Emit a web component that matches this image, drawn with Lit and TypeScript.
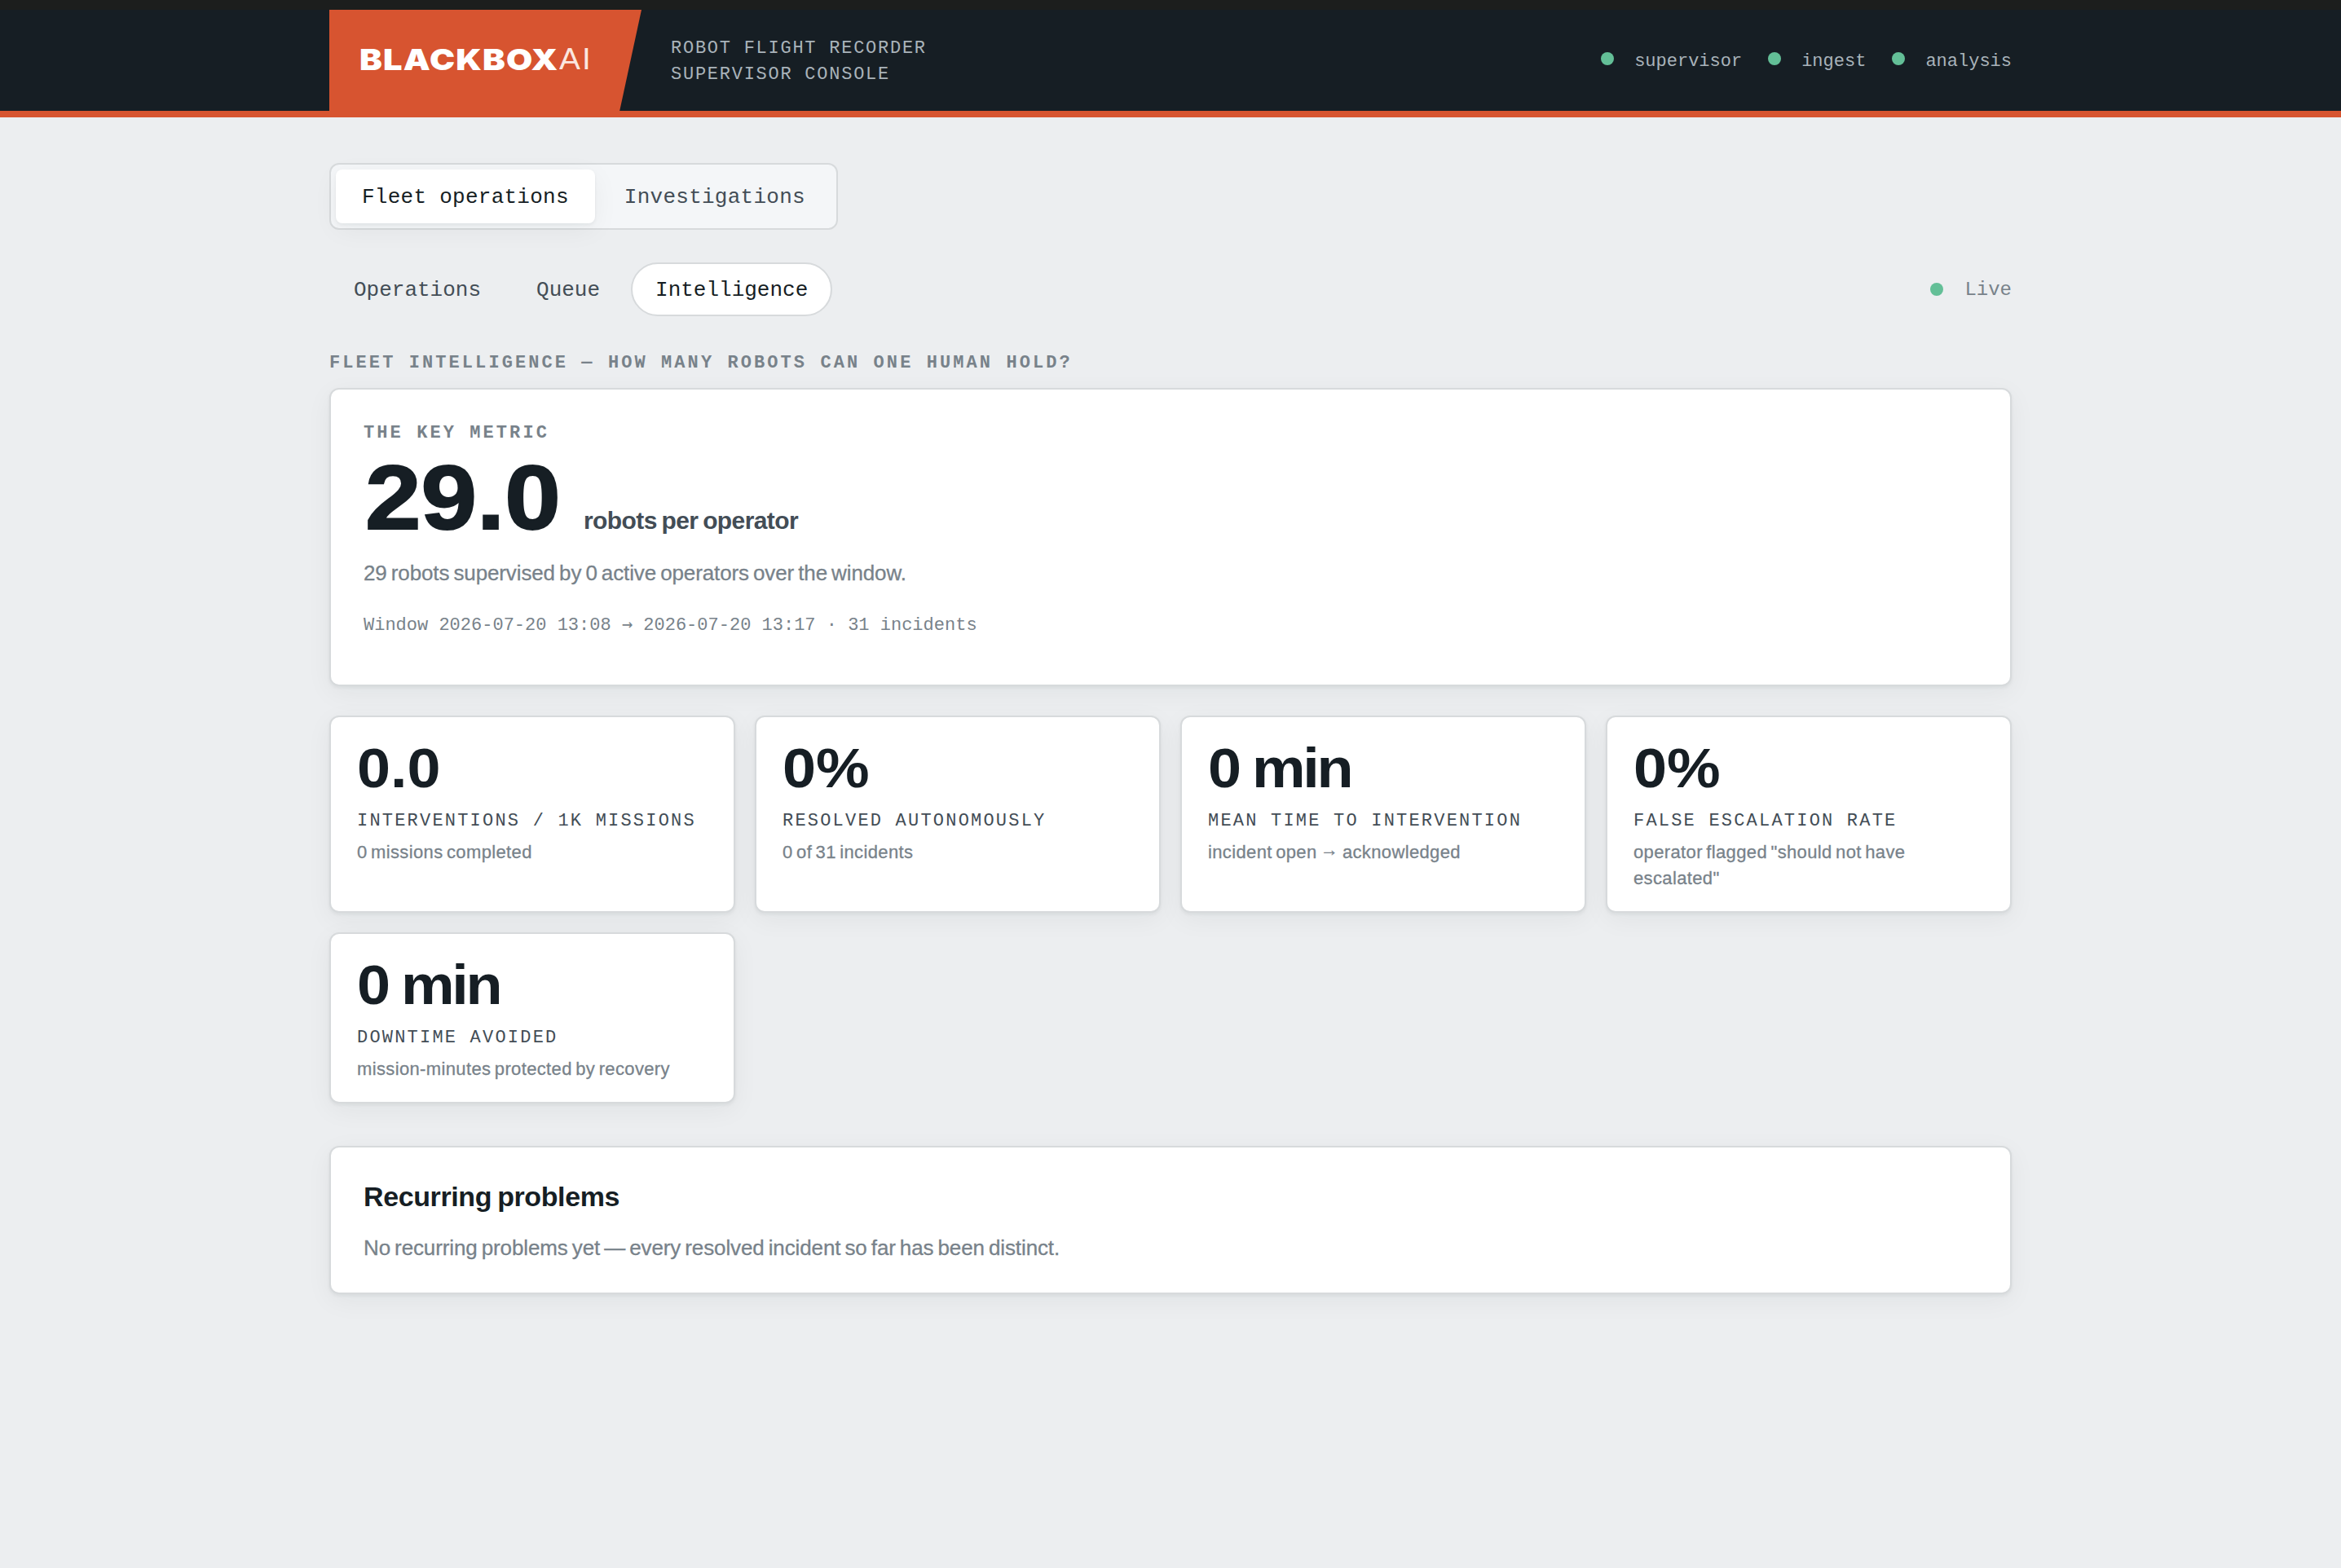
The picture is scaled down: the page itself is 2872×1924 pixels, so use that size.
import { LitElement, html, css, nothing } from "lit";
import { customElement, property } from "lit/decorators.js";

@customElement("status-dot")
export class StatusDot extends LitElement {
  static styles = css`
    :host {
      display: block;
      flex: none;
      width: 16px;
      height: 16px;
      border-radius: 50%;
      background: #63bf97;
    }
  `;
  render() {
    return html``;
  }
}

@customElement("stat-card")
export class StatCard extends LitElement {
  @property() value = "";
  @property() unit = "";
  @property() label = "";
  @property() detail = "";

  static styles = css`
    :host {
      display: block;
      box-sizing: border-box;
      padding: 28px 32px 24px;
      border: 2px solid #d7dadc;
      border-radius: 12px;
      background: #fff;
      box-shadow: 0 2px 4px rgba(22, 30, 36, 0.06), 0 8px 32px rgba(22, 30, 36, 0.05);
      font-family: "Liberation Sans", Arial, sans-serif;
    }
    .value {
      font-size: 68px;
      line-height: 68px;
      font-weight: 700;
      color: #161e24;
      white-space: nowrap;
      word-spacing: -7px;
      transform: scaleX(1.085);
      transform-origin: 0 50%;
    }
    .unit {
      letter-spacing: -3px;
    }
    .label {
      margin-top: 16px;
      margin-bottom: 6px;
      font: 400 22px/32px "Liberation Mono", "Courier New", monospace;
      letter-spacing: 2.2px;
      text-transform: uppercase;
      white-space: nowrap;
      color: #434d56;
    }
    .detail {
      font-size: 22px;
      line-height: 32px;
      letter-spacing: 0.36px;
      word-spacing: -2px;
      color: #78828a;
      -webkit-text-stroke: 0.3px #78828a;
    }
    .arrow {
      vertical-align: 3px;
      line-height: 0;
    }
  `;

  render() {
    const [before, after] = this.detail.split("→");
    return html`
      <div class="value">${this.value}${this.unit ? html` <span class="unit">${this.unit}</span>` : nothing}</div>
      <div class="label">${this.label}</div>
      <div class="detail">${before}${after ? html`<span class="arrow">→</span>${after}` : nothing}</div>
    `;
  }
}

const services = ["supervisor", "ingest", "analysis"];
const areas = ["Fleet operations", "Investigations"];
const views = ["Operations", "Queue", "Intelligence"];
const stats = [
  { value: "0.0", unit: "", label: "Interventions / 1k missions", detail: "0 missions completed" },
  { value: "0%", unit: "", label: "Resolved autonomously", detail: "0 of 31 incidents" },
  { value: "0", unit: "min", label: "Mean time to intervention", detail: "incident open → acknowledged" },
  { value: "0%", unit: "", label: "False escalation rate", detail: 'operator flagged "should not have escalated"' },
  { value: "0", unit: "min", label: "Downtime avoided", detail: "mission-minutes protected by recovery" },
];

@customElement("app-root")
export class AppRoot extends LitElement {
  static styles = css`
    :host {
      --mono: "Liberation Mono", "Courier New", monospace;
      display: block;
      min-height: 1924px;
      background: #eceef0;
      color: #161e24;
      font-family: "Liberation Sans", Arial, sans-serif;
    }
    .strip {
      height: 12px;
      background: #1c1e1d;
    }
    .header {
      height: 124px;
      background: #161e24;
      border-bottom: 8px solid #d75430;
    }
    .wrap {
      width: 2064px;
      margin: 0 auto;
    }
    .bar {
      display: flex;
      align-items: center;
      height: 124px;
    }
    .brand {
      box-sizing: border-box;
      display: flex;
      align-items: center;
      width: 383px;
      height: 124px;
      padding-left: 37px;
      padding-bottom: 3px;
      background: #d75430;
      clip-path: polygon(0 0, 100% 0, 93% 100%, 0 100%);
      color: #fff;
      font: 900 36px/50px Inter, sans-serif;
    }
    .name {
      width: 245px;
      letter-spacing: 1px;
      transform: scaleX(1.157);
      transform-origin: 0 50%;
    }
    .suffix {
      font: 400 36px/50px "Liberation Sans", Arial, sans-serif;
      letter-spacing: 2px;
      color: #fbe6df;
      transform: scaleX(1.08);
      transform-origin: 0 50%;
    }
    .tagline {
      padding-top: 4px;
      margin-left: 36px;
      font: 400 22px/32px var(--mono);
      letter-spacing: 1.74px;
      text-transform: uppercase;
      color: #a9b3ba;
    }
    .services {
      display: flex;
      gap: 32px;
      margin-left: auto;
    }
    .service {
      display: flex;
      align-items: center;
      gap: 25px;
      font: 400 22px/32px var(--mono);
      color: #a9b3ba;
    }
    .service span {
      padding-top: 4px;
    }
    .service status-dot {
      margin-bottom: 4px;
    }
    .main {
      padding-top: 56px;
    }
    .areas {
      box-sizing: border-box;
      display: flex;
      gap: 4px;
      width: fit-content;
      padding: 6px;
      border: 2px solid #d7dadc;
      border-radius: 12px;
      background: #f4f6f8;
    }
    .area {
      box-sizing: border-box;
      height: 66px;
      padding: 3px 32px 0;
      border-radius: 8px;
      font: 400 26px/62px var(--mono);
      letter-spacing: 0.26px;
      color: #434d56;
    }
    .area.on {
      background: #fff;
      color: #161e24;
      box-shadow: 0 2px 4px rgba(22, 30, 36, 0.06), 0 8px 32px rgba(22, 30, 36, 0.05);
    }
    .row {
      display: flex;
      align-items: center;
      justify-content: space-between;
      margin-top: 40px;
    }
    .views {
      display: flex;
      gap: 8px;
    }
    .view {
      box-sizing: border-box;
      height: 66px;
      padding: 3px 28px 0;
      border: 2px solid transparent;
      border-radius: 33px;
      font: 400 26px/58px var(--mono);
      color: #434d56;
    }
    .view.on {
      background: #fff;
      border-color: #d7dadc;
      color: #161e24;
    }
    .live {
      display: flex;
      align-items: center;
      gap: 26.4px;
      font: 400 24px/30px var(--mono);
      color: #78828a;
    }
    .live span {
      padding-top: 2px;
    }
    .eyebrow {
      font: 700 22px/32px var(--mono);
      letter-spacing: 3.08px;
      text-transform: uppercase;
      color: #78828a;
    }
    .section {
      margin: 42px 0 14px;
    }
    .card {
      box-sizing: border-box;
      border: 2px solid #d7dadc;
      border-radius: 12px;
      background: #fff;
      box-shadow: 0 2px 4px rgba(22, 30, 36, 0.06), 0 8px 32px rgba(22, 30, 36, 0.05);
    }
    .key {
      height: 366px;
      padding: 38px 40px 0;
    }
    .metric {
      display: flex;
      align-items: baseline;
      gap: 52px;
      margin-top: 7px;
      padding-left: 2px;
    }
    .number {
      font-size: 111px;
      line-height: 112px;
      font-weight: 700;
      -webkit-text-stroke: 2px #161e24;
      transform: scaleX(1.11);
      transform-origin: 0 50%;
    }
    .unit {
      font-size: 30px;
      line-height: 36px;
      font-weight: 700;
      letter-spacing: -0.6px;
      word-spacing: -2px;
      color: #434d56;
    }
    .text {
      font-size: 26px;
      line-height: 40px;
      letter-spacing: -0.12px;
      word-spacing: -2px;
      color: #78828a;
      -webkit-text-stroke: 0.3px #78828a;
    }
    .metric + .text {
      margin-top: 16px;
    }
    .window {
      margin-top: 29px;
      font: 400 22px/32px var(--mono);
      color: #78828a;
    }
    .arrow {
      font-family: "DejaVu Sans Mono", monospace;
      line-height: 0;
    }
    .stats {
      display: grid;
      grid-template-columns: repeat(4, 1fr);
      gap: 24px;
      margin-top: 36px;
    }
    .problems {
      height: 182px;
      margin-top: 52px;
      padding: 40px 40px 0;
    }
    .title {
      margin-bottom: 23px;
      font-size: 34px;
      line-height: 40px;
      font-weight: 700;
      letter-spacing: -0.39px;
      word-spacing: -2px;
    }
  `;

  render() {
    return html`
      <div class="strip"></div>
      <div class="header">
        <div class="wrap bar">
          <div class="brand"><span class="name">BLACKBOX</span><span class="suffix">AI</span></div>
          <div class="tagline">Robot flight recorder<br />Supervisor console</div>
          <div class="services">
            ${services.map((s) => html`<div class="service"><status-dot></status-dot><span>${s}</span></div>`)}
          </div>
        </div>
      </div>
      <div class="wrap main">
        <div class="areas">
          ${areas.map((a, i) => html`<div class="area ${i === 0 ? "on" : ""}">${a}</div>`)}
        </div>
        <div class="row">
          <div class="views">
            ${views.map((v, i) => html`<div class="view ${i === 2 ? "on" : ""}">${v}</div>`)}
          </div>
          <div class="live"><status-dot></status-dot><span>Live</span></div>
        </div>
        <div class="eyebrow section">Fleet intelligence — how many robots can one human hold?</div>
        <div class="card key">
          <div class="eyebrow">The key metric</div>
          <div class="metric"><span class="number">29.0</span><span class="unit">robots per operator</span></div>
          <div class="text">29 robots supervised by 0 active operators over the window.</div>
          <div class="window">
            Window 2026-07-20 13:08 <span class="arrow">→</span> 2026-07-20 13:17 · 31 incidents
          </div>
        </div>
        <div class="stats">
          ${stats.map(
            (s) =>
              html`<stat-card .value=${s.value} .unit=${s.unit} .label=${s.label} .detail=${s.detail}></stat-card>`,
          )}
        </div>
        <div class="card problems">
          <div class="title">Recurring problems</div>
          <div class="text">No recurring problems yet — every resolved incident so far has been distinct.</div>
        </div>
      </div>
    `;
  }
}
